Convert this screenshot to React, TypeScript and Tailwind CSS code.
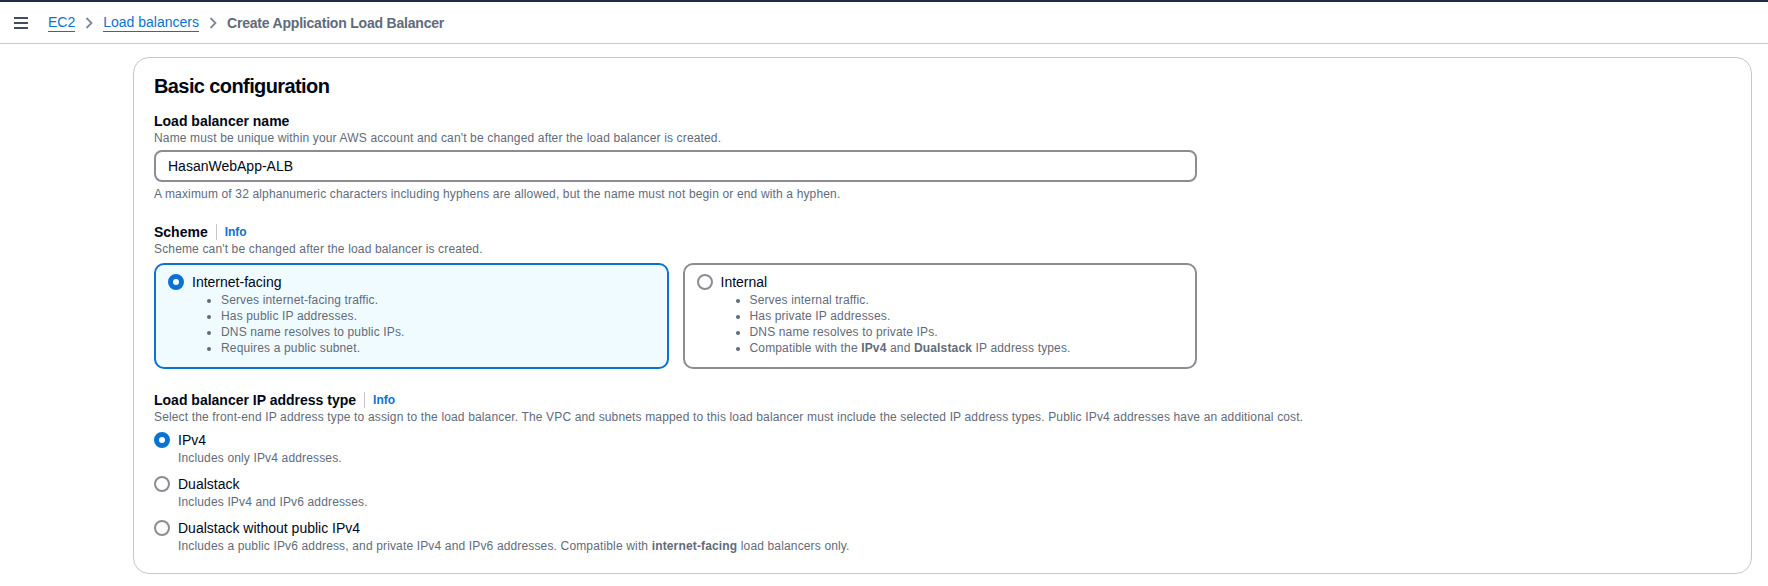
import React from 'react';

const Radio: React.FC<{ checked?: boolean }> = ({ checked }) =>
  checked ? (
    <span className="box-border block h-4 w-4 shrink-0 rounded-full border-[5px] border-[#0972d3] bg-white" />
  ) : (
    <span className="box-border block h-4 w-4 shrink-0 rounded-full border-2 border-[#8c8c94] bg-white" />
  );

const Info: React.FC = () => (
  <>
    <span className="mx-2 h-4 w-px bg-[#c6c6cd]" />
    <span className="text-xs font-bold text-[#0972d3]">Info</span>
  </>
);

const Tile: React.FC<{ checked?: boolean; label: string; items: React.ReactNode[] }> = ({ checked, label, items }) => (
  <div
    className={
      checked
        ? 'flex-1 rounded-[10px] border-2 border-[#0972d3] bg-[#f0fbff] pt-[7px] pb-[11px] pl-3 pr-3'
        : 'flex-1 rounded-[10px] border-2 border-[#8c8c94] bg-white pt-[7px] pb-[11px] pl-3 pr-3'
    }
  >
    <div className="flex items-center gap-2">
      <Radio checked={checked} />
      <span className="text-sm leading-5 text-[#000716]">{label}</span>
    </div>
    <ul className="ml-[53px] list-disc text-xs leading-4 tracking-[0.15px] text-[#5f6b7a] marker:text-[#5f6b7a]">
      {items.map((it, i) => (
        <li key={i}>{it}</li>
      ))}
    </ul>
  </div>
);

const Option: React.FC<{ checked?: boolean; label: string; desc: React.ReactNode }> = ({ checked, label, desc }) => (
  <div>
    <div className="flex items-center gap-2">
      <Radio checked={checked} />
      <span className="text-sm leading-5 text-[#000716]">{label}</span>
    </div>
    <p className="pl-6 text-xs leading-4 tracking-[0.15px] text-[#5f6b7a]">{desc}</p>
  </div>
);

export default function App() {
  return (
    <div className="min-h-[586px] bg-white font-['Liberation_Sans',Arial,sans-serif] text-[#000716]">
      <header className="flex h-[44px] items-center border-t-2 border-b border-t-[#232f3e] border-b-[#c6c6cd] pl-[14px]">
        <svg width="14" height="12" viewBox="0 0 14 12" className="text-[#414d5c]">
          <path d="M0 1h14M0 6h14M0 11h14" stroke="currentColor" strokeWidth="2" />
        </svg>
        <nav className="ml-[20px] flex items-center text-sm">
          <span className="border-b border-[#0972d3] leading-[18px] text-[#0972d3]">EC2</span>
          <svg width="8" height="12" viewBox="0 0 8 12" className="mx-[10px] text-[#7d8998]">
            <path d="M1.5 1l5 5-5 5" fill="none" stroke="currentColor" strokeWidth="1.8" />
          </svg>
          <span className="border-b border-[#0972d3] leading-[18px] text-[#0972d3]">Load balancers</span>
          <svg width="8" height="12" viewBox="0 0 8 12" className="mx-[10px] text-[#7d8998]">
            <path d="M1.5 1l5 5-5 5" fill="none" stroke="currentColor" strokeWidth="1.8" />
          </svg>
          <span className="font-bold tracking-[-0.2px] text-[#5f6b7a]">Create Application Load Balancer</span>
        </nav>
      </header>

      <main className="pt-[13px] pl-[133px] pr-4">
        <section className="rounded-2xl border border-[#c6c6cd] px-5 pt-4 pb-[19px]">
          <h2 className="text-[20px] font-bold leading-6 tracking-[-0.6px]">Basic configuration</h2>

          <div className="mt-[14px]">
            <div className="text-sm font-bold leading-[18px]">Load balancer name</div>
            <p className="text-xs leading-4 tracking-[0.15px] text-[#5f6b7a]">
              Name must be unique within your AWS account and can't be changed after the load balancer is created.
            </p>
            <div className="mt-1 flex h-8 w-[1043px] items-center rounded-lg border-2 border-[#8c8c94] px-3 text-sm">
              HasanWebApp-ALB
            </div>
            <p className="mt-1 text-xs leading-4 tracking-[0.15px] text-[#5f6b7a]">
              A maximum of 32 alphanumeric characters including hyphens are allowed, but the name must not begin or end with a hyphen.
            </p>
          </div>

          <div className="mt-[21px]">
            <div className="flex items-center text-sm font-bold leading-[18px]">
              Scheme
              <Info />
            </div>
            <p className="text-xs leading-4 tracking-[0.15px] text-[#5f6b7a]">
              Scheme can't be changed after the load balancer is created.
            </p>
            <div className="mt-[6px] flex w-[1043px] gap-[14px]">
              <Tile
                checked
                label="Internet-facing"
                items={[
                  'Serves internet-facing traffic.',
                  'Has public IP addresses.',
                  'DNS name resolves to public IPs.',
                  'Requires a public subnet.',
                ]}
              />
              <Tile
                label="Internal"
                items={[
                  'Serves internal traffic.',
                  'Has private IP addresses.',
                  'DNS name resolves to private IPs.',
                  <>
                    Compatible with the <b>IPv4</b> and <b>Dualstack</b> IP address types.
                  </>,
                ]}
              />
            </div>
          </div>

          <div className="mt-[22px]">
            <div className="flex items-center text-sm font-bold leading-[18px]">
              Load balancer IP address type
              <Info />
            </div>
            <p className="text-xs leading-4 tracking-[0.15px] text-[#5f6b7a]">
              Select the front-end IP address type to assign to the load balancer. The VPC and subnets mapped to this load balancer must include the selected IP address types. Public IPv4 addresses have an additional cost.
            </p>
            <div className="mt-[5px] flex flex-col gap-2">
              <Option checked label="IPv4" desc="Includes only IPv4 addresses." />
              <Option label="Dualstack" desc="Includes IPv4 and IPv6 addresses." />
              <Option
                label="Dualstack without public IPv4"
                desc={
                  <>
                    Includes a public IPv6 address, and private IPv4 and IPv6 addresses. Compatible with{' '}
                    <b>internet-facing</b> load balancers only.
                  </>
                }
              />
            </div>
          </div>
        </section>
      </main>
    </div>
  );
}
